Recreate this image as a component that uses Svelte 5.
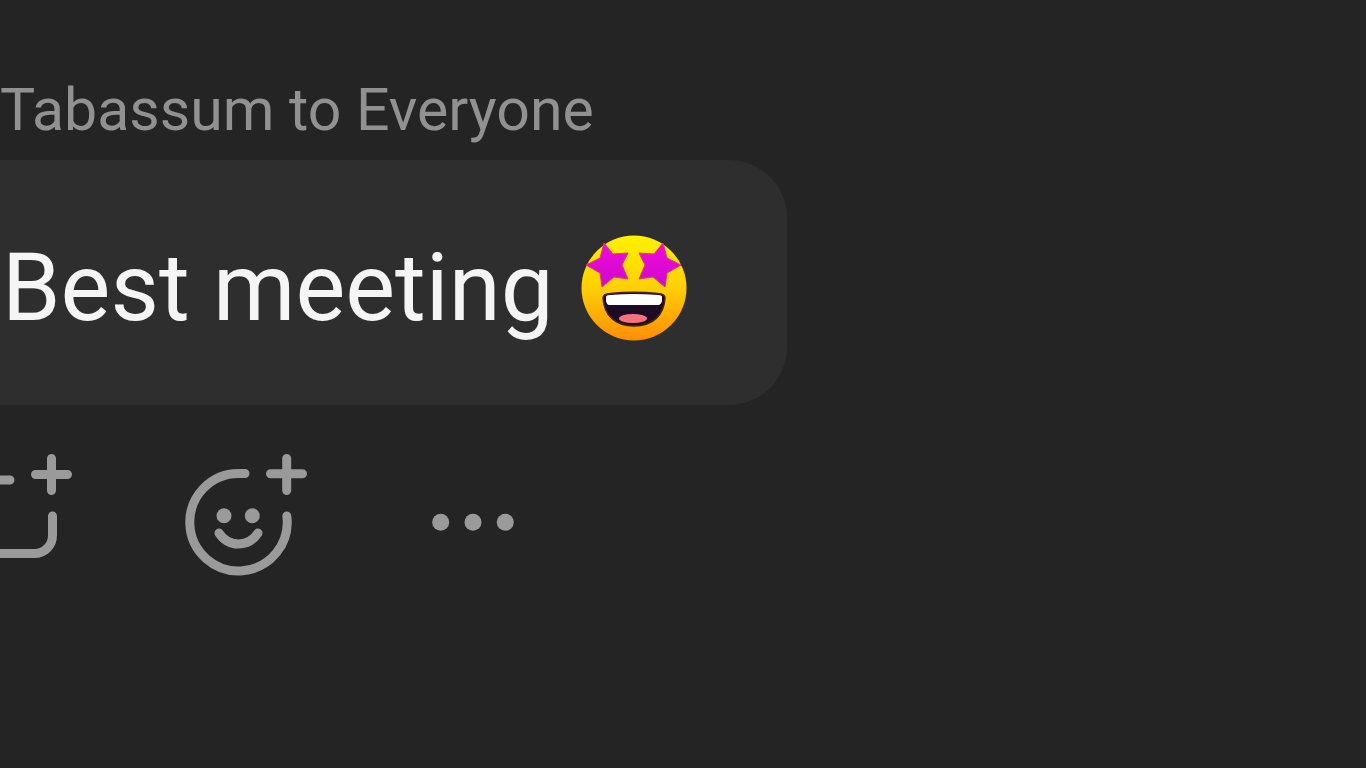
<script lang="ts">
	interface Message {
		sender: string;
		recipient: string;
		text: string;
	}

	const message: Message = {
		sender: 'Tabassum',
		recipient: 'Everyone',
		text: 'Best meeting'
	};
</script>

<main class="chat">
	<article class="message">
		<header class="meta">{message.sender} to {message.recipient}</header>

		<p class="bubble">
			<span>{message.text}</span>
			<svg class="emoji" viewBox="0 0 106 106" role="img" aria-label="Star-struck">
				<defs>
					<linearGradient id="face" x1="0" y1="0" x2="0" y2="1">
						<stop offset="0" stop-color="#fff200" />
						<stop offset="0.5" stop-color="#ffcf05" />
						<stop offset="1" stop-color="#ff8d05" />
					</linearGradient>
					<linearGradient id="star" x1="0" y1="0" x2="0" y2="1">
						<stop offset="0" stop-color="#f20ad8" />
						<stop offset="1" stop-color="#cf08cf" />
					</linearGradient>
					<path
						id="eye"
						d="M23 8 32 19 47 18 41 30 47 44 33 42 21 52 19 38 5 30 19 23Z"
						stroke-linejoin="round"
					/>
					<clipPath id="mouth">
						<path d="M22 63Q22 59 29 58.500Q53 56 77 58.500Q84 59 84 63C83 80 72 91 53 91S23 80 22 63Z" />
					</clipPath>
				</defs>
				<circle cx="53" cy="53" r="52.500" fill="url(#face)" />
				<use href="#eye" fill="url(#star)" stroke="#dc3a76" stroke-width="1" />
				<use
					href="#eye"
					fill="url(#star)"
					stroke="#dc3a76"
					stroke-width="1"
					transform="translate(105 0) scale(-1 1)"
				/>
				<g clip-path="url(#mouth)">
					<path d="M20 55h66v38H20z" fill="#1c0b25" />
					<path d="M25 62Q25 60 29 60Q53 58 77 60Q81 60 81 62V66Q80 70 77 70H28Q26 70 25 66Z" fill="#fff" />
					<ellipse cx="52" cy="83.500" rx="14" ry="4.500" fill="#f9707f" />
				</g>
				<path
					d="M22 63Q22 59 29 58.500Q53 56 77 58.500Q84 59 84 63C83 80 72 91 53 91S23 80 22 63Z"
					fill="none"
					stroke="#4a2408"
					stroke-width="1.500"
				/>
			</svg>
		</p>

		<div class="actions">
			<button type="button" aria-label="Reply">
				<svg viewBox="0 0 122 122" aria-hidden="true">
					<path d="M60 26H22.500a18 18 0 0 0-18 18v37.500a18 18 0 0 0 18 18h62a18 18 0 0 0 18-18V62" />
					<path d="M85.500 20.500h32M101.500 4.500v32" />
				</svg>
			</button>
			<button type="button" aria-label="Add reaction">
				<svg viewBox="0 0 122 122" aria-hidden="true">
					<path d="M60 19.500H53.500A48.700 48.700 0 1 0 101.800 62" />
					<path d="M85.500 19.800h32M101.700 4.500v32" />
					<path d="M34 79Q41 90 53.500 90T73 79" />
					<circle class="dot" cx="39" cy="61.700" r="7.500" />
					<circle class="dot" cx="67.300" cy="61.700" r="7.500" />
				</svg>
			</button>
			<button type="button" aria-label="More options">
				<svg viewBox="0 0 122 122" aria-hidden="true">
					<circle class="dot" cx="20.700" cy="68.300" r="8.500" />
					<circle class="dot" cx="53" cy="68.300" r="8.500" />
					<circle class="dot" cx="85.300" cy="68.300" r="8.500" />
				</svg>
			</button>
		</div>
	</article>
</main>

<style>
	:global(body) {
		margin: 0;
		background: #242424;
	}

	.chat {
		min-height: 100vh;
		box-sizing: border-box;
		padding-top: 74px;
		overflow: hidden;
		background: #242424;
		font-family: Roboto, 'Liberation Sans', sans-serif;
	}

	.message {
		display: flex;
		flex-direction: column;
		align-items: flex-start;
	}

	.meta {
		font-size: 59px;
		line-height: 72px;
		color: #919191;
		white-space: nowrap;
	}

	.bubble {
		display: flex;
		align-items: center;
		gap: 28px;
		margin: 14px 0 0;
		padding: 72px 100px 61px 2px;
		border-radius: 0 58px 58px 0;
		background: #2e2e2e;
		color: #f5f5f5;
		font-size: 94px;
		line-height: 112px;
		white-space: nowrap;
	}

	.emoji {
		width: 106px;
		height: 106px;
		flex-shrink: 0;
	}

	.actions {
		display: flex;
		gap: 113px;
		margin: 49px 0 0 -50px;
	}

	.actions button {
		padding: 0;
		border: none;
		background: none;
		color: #9a9a9a;
		cursor: pointer;
	}

	.actions svg {
		display: block;
		width: 122px;
		height: 122px;
		fill: none;
		stroke: currentColor;
		stroke-width: 9;
		stroke-linecap: round;
		stroke-linejoin: round;
	}

	.actions .dot {
		fill: currentColor;
		stroke: none;
	}
</style>
